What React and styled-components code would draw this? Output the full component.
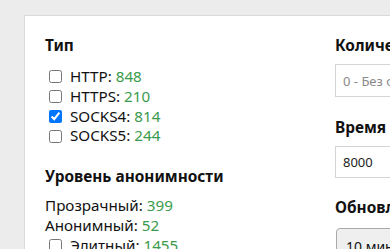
import React from "react";
import styled, { createGlobalStyle } from "styled-components";

const Global = createGlobalStyle`
  html, body { margin: 0; padding: 0; }
  body {
    background: #ececec;
    overflow: hidden;
    font-family: "Noto Sans", "Open Sans", Arial, sans-serif;
    color: #111;
  }
`;

const Page = styled.div`
  padding: 15px 0 0 24px;
  width: 800px;
`;

const Card = styled.div`
  background: #fff;
  border: 1px solid #d9d9d9;
  padding: 20px;
  width: 640px;
  min-height: 400px;
  display: grid;
  grid-template-columns: 270px 1fr;
  column-gap: 20px;
  align-items: start;
`;

const Column = styled.div`
  display: flex;
  flex-direction: column;
`;

const Heading = styled.div`
  font-size: 15.4px;
  font-weight: 700;
  line-height: 20px;
  margin-bottom: ${(p) => p.$mb ?? 10}px;
`;

const List = styled.div`
  display: flex;
  flex-direction: column;
  margin-bottom: ${(p) => p.$mb ?? 0}px;
`;

const Row = styled.label`
  display: flex;
  align-items: center;
  font-size: 15.2px;
  line-height: 19.8px;
  height: 19.8px;
  white-space: nowrap;
`;

const Check = styled.input.attrs({ type: "checkbox" })`
  width: 13px;
  height: 13px;
  margin: 0 8px 0 4px;
  accent-color: #0075ff;
`;

const Count = styled.span`
  color: #3a9b4c;
  margin-left: 4px;
`;

const Field = styled.input`
  box-sizing: border-box;
  width: 300px;
  height: ${(p) => p.$h ?? 33}px;
  border: 1px solid #d4d4d4;
  border-radius: 0;
  padding: 0 7px;
  font-family: "Noto Sans", "Open Sans", Arial, sans-serif;
  font-size: 13px;
  color: #222;
  margin-bottom: ${(p) => p.$mb ?? 21}px;
  outline: none;
  &::placeholder { color: #8a8a8a; }
`;

const SelectBox = styled.div`
  box-sizing: border-box;
  width: 300px;
  height: 30px;
  margin-left: 1px;
  border: 1px solid #a9a9a9;
  border-radius: 4px;
  background: #efefef;
  padding: 6px 9px 0;
  display: flex;
  align-items: center;
  font-size: 14px;
  color: #111;
`;

function CheckRow({ label, count, checked }) {
  return (
    <Row>
      <Check defaultChecked={checked} />
      {label}:<Count>{count}</Count>
    </Row>
  );
}

function PlainRow({ label, count }) {
  return (
    <Row>
      {label}:<Count>{count}</Count>
    </Row>
  );
}

export default function App() {
  return (
    <>
      <Global />
      <Page>
        <Card>
          <Column>
            <Heading $mb={11}>Тип</Heading>
            <List $mb={21}>
              <CheckRow label="HTTP" count="848" />
              <CheckRow label="HTTPS" count="210" />
              <CheckRow label="SOCKS4" count="814" checked />
              <CheckRow label="SOCKS5" count="244" />
            </List>
            <Heading $mb={9}>Уровень анонимности</Heading>
            <List>
              <PlainRow label="Прозрачный" count="399" />
              <PlainRow label="Анонимный" count="52" />
              <CheckRow label="Элитный" count="1455" />
            </List>
          </Column>
          <Column>
            <Heading $mb={8}>Количество</Heading>
            <Field placeholder="0 - Без ограничений" $h={33} />
            <Heading $mb={8}>Время ответа</Heading>
            <Field defaultValue="8000" $h={32} $mb={20} />
            <Heading $mb={10}>Обновлять</Heading>
            <SelectBox>10 минут</SelectBox>
          </Column>
        </Card>
      </Page>
    </>
  );
}
